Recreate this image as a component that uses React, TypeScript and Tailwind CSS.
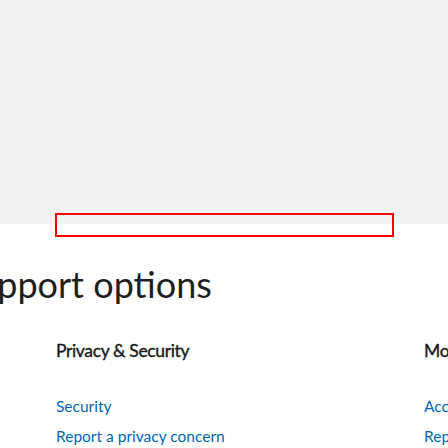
const columns = [
  {
    title: "Privacy & Security",
    links: ["Security", "Report a privacy concern"],
  },
  {
    title: "More",
    links: ["Accessibility", "Report a concern"],
  },
];

export default function App() {
  return (
    <div className="relative w-[448px] h-[448px] overflow-hidden bg-white font-['Lato',sans-serif]">
      <div className="h-[224px] bg-[#f2f2f2]" />
      <div className="absolute left-[55px] top-[213px] w-[339px] h-[24px] border-2 border-[#ff0000]" />

      <h1 className="-ml-[42px] mt-[38px] whitespace-nowrap text-[36px] leading-[44px] font-normal text-[#1f1f1f]">
        Support options
      </h1>

      <div className="mt-[33px] ml-[56px] grid grid-cols-[368px_368px]">
        {columns.map((col) => (
          <div key={col.title} className="flex flex-col">
            <h2 className="text-[17.5px] leading-[24px] font-normal tracking-[-0.35px] text-[#1a1a1a] whitespace-nowrap [-webkit-text-stroke:0.4px_#1a1a1a]">
              {col.title}
            </h2>
            <ul className="mt-[31px] flex flex-col gap-[10px]">
              {col.links.map((link) => (
                <li key={link} className="h-[20px]">
                  <a href="#" className="text-[15.5px] leading-[20px] text-[#0067b8] whitespace-nowrap">
                    {link}
                  </a>
                </li>
              ))}
            </ul>
          </div>
        ))}
      </div>
    </div>
  );
}
